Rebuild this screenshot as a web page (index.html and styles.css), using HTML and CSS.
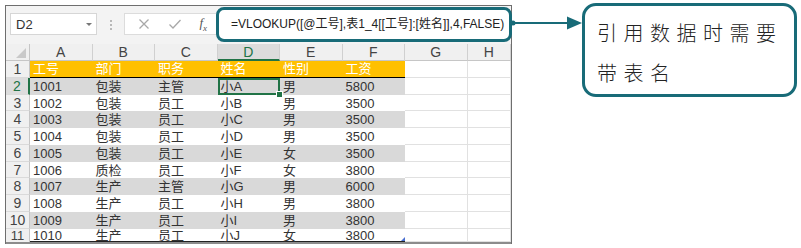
FILE: index.html
```html
<!DOCTYPE html>
<html lang="zh-CN">
<head>
    <meta charset="UTF-8">
    <title>VLOOKUP 表引用</title>
    <link rel="stylesheet" href="styles.css">
</head>
<body>

<div class="excel">
    <div class="toolbar">
        <div class="namebox">
            <span>D2</span>
            <span class="drop"></span>
        </div>
        <div class="grip"><i></i><i></i><i></i></div>
        <div class="buttons">
            <svg width="12" height="12" viewBox="0 0 12 12"><path d="M1.5 1.5 L10.5 10.5 M10.5 1.5 L1.5 10.5" stroke="#a8a8a8" stroke-width="1.3" fill="none"/></svg>
            <svg width="14" height="12" viewBox="0 0 14 12"><path d="M1.5 6.5 L5 10 L12.5 2" stroke="#a8a8a8" stroke-width="1.3" fill="none"/></svg>
            <span class="fx">f<sub>x</sub></span>
        </div>
        <div class="formula">=VLOOKUP([@工号],表1_4[[工号]:[姓名]],4,FALSE)</div>
    </div>

    <div class="sheet">
        <div class="corner"><span></span></div>
        <div class="ch">A</div><div class="ch">B</div><div class="ch">C</div><div class="ch sel">D</div>
        <div class="ch">E</div><div class="ch">F</div><div class="ch">G</div><div class="ch">H</div>

        <div class="rh">1</div>
        <div class="c head">工号</div><div class="c head">部门</div><div class="c head">职务</div>
        <div class="c head">姓名</div><div class="c head">性别</div><div class="c head">工资</div>
        <div class="c blank"></div><div class="c blank"></div>

        <div class="rh sel">2</div>
        <div class="c band">1001</div><div class="c band">包装</div><div class="c band">主管</div>
        <div class="c band active">小A</div><div class="c band">男</div><div class="c band">5800</div>
        <div class="c blank"></div><div class="c blank"></div>

        <div class="rh">3</div>
        <div class="c">1002</div><div class="c">包装</div><div class="c">员工</div>
        <div class="c">小B</div><div class="c">男</div><div class="c">3500</div>
        <div class="c blank"></div><div class="c blank"></div>

        <div class="rh">4</div>
        <div class="c band">1003</div><div class="c band">包装</div><div class="c band">员工</div>
        <div class="c band">小C</div><div class="c band">男</div><div class="c band">3500</div>
        <div class="c blank"></div><div class="c blank"></div>

        <div class="rh">5</div>
        <div class="c">1004</div><div class="c">包装</div><div class="c">员工</div>
        <div class="c">小D</div><div class="c">男</div><div class="c">3500</div>
        <div class="c blank"></div><div class="c blank"></div>

        <div class="rh">6</div>
        <div class="c band">1005</div><div class="c band">包装</div><div class="c band">员工</div>
        <div class="c band">小E</div><div class="c band">女</div><div class="c band">3500</div>
        <div class="c blank"></div><div class="c blank"></div>

        <div class="rh">7</div>
        <div class="c">1006</div><div class="c">质检</div><div class="c">员工</div>
        <div class="c">小F</div><div class="c">女</div><div class="c">3800</div>
        <div class="c blank"></div><div class="c blank"></div>

        <div class="rh">8</div>
        <div class="c band">1007</div><div class="c band">生产</div><div class="c band">主管</div>
        <div class="c band">小G</div><div class="c band">男</div><div class="c band">6000</div>
        <div class="c blank"></div><div class="c blank"></div>

        <div class="rh">9</div>
        <div class="c">1008</div><div class="c">生产</div><div class="c">员工</div>
        <div class="c">小H</div><div class="c">男</div><div class="c">3800</div>
        <div class="c blank"></div><div class="c blank"></div>

        <div class="rh">10</div>
        <div class="c band">1009</div><div class="c band">生产</div><div class="c band">员工</div>
        <div class="c band">小I</div><div class="c band">男</div><div class="c band">3800</div>
        <div class="c blank"></div><div class="c blank"></div>

        <div class="rh last">11</div>
        <div class="c last">1010</div><div class="c last">生产</div><div class="c last">员工</div>
        <div class="c last">小J</div><div class="c last">女</div><div class="c last end">3800</div>
        <div class="c blank"></div><div class="c blank"></div>
    </div>
</div>

<svg class="connector" width="71" height="30" viewBox="0 0 71 30">
    <circle cx="2" cy="15" r="2.5" fill="#186b78"/>
    <path d="M2 15 H58" stroke="#186b78" stroke-width="2"/>
    <path d="M56 8.5 L71 15 L56 21.5 Z" fill="#186b78"/>
</svg>

<div class="callout">引用数据时需要<br>带表名</div>

</body>
</html>
```

FILE: styles.css
```css
body {
    margin: 0;
    background: #fff;
    display: flex;
    align-items: flex-start;
    font-family: "Liberation Sans", "Noto Sans CJK SC", sans-serif;
    color: #333;
}
.excel {
    margin: 5px 0 0 5px;
    width: 505px;
    border: 1px solid #6e6e6e;
    border-bottom: none;
    background: #f3f3f3;
}
.toolbar {
    height: 38px;
    display: flex;
    align-items: flex-start;
}
.namebox {
    margin: 7px 0 0 4px;
    width: 87px;
    height: 22px;
    box-sizing: border-box;
    background: #fff;
    border: 1px solid #d6d6d6;
    display: flex;
    align-items: center;
    justify-content: space-between;
    padding: 0 4px 0 5px;
    font-size: 13px;
    color: #333;
}
.drop {
    width: 0;
    height: 0;
    border-left: 3px solid transparent;
    border-right: 3px solid transparent;
    border-top: 3px solid #777;
}
.grip {
    width: 27px;
    margin-top: 14px;
    display: flex;
    flex-direction: column;
    align-items: center;
    gap: 2px;
}
.grip i {
    width: 2px;
    height: 2px;
    background: #b8b8b8;
}
.buttons {
    margin-top: 7px;
    width: 92px;
    height: 22px;
    box-sizing: border-box;
    background: #fff;
    border: 1px solid #dcdcdc;
    border-right: none;
    display: flex;
    align-items: center;
    justify-content: space-around;
    padding-left: 4px;
}
.fx {
    font-family: "Liberation Serif", serif;
    font-style: italic;
    font-size: 13px;
    color: #555;
}
.fx sub {
    font-size: 9px;
}
.formula {
    margin: 1px -1px 0 0;
    flex: 1;
    height: 35px;
    box-sizing: border-box;
    background: #fff;
    border: 3px solid #186b78;
    border-radius: 8px;
    padding-left: 12px;
    font-size: 12px;
    line-height: 29px;
    color: #222;
    white-space: nowrap;
    overflow: hidden;
}
.sheet {
    display: grid;
    grid-template-columns: 24px repeat(7, 62.5px) 1fr;
    grid-template-rows: 17px repeat(10, 16.75px) 13px;
    background: #fff;
    border-bottom: 2px solid #8c8c8c;
    font-size: 13px;
    overflow: hidden;
}
.corner {
    background: #f0f0f0;
    border-right: 1px solid #c6c6c6;
    border-bottom: 1px solid #c6c6c6;
    position: relative;
}
.corner span {
    position: absolute;
    right: 3px;
    bottom: 2px;
    width: 0;
    height: 0;
    border-left: 10px solid transparent;
    border-bottom: 10px solid #c9c9c9;
}
.ch {
    background: #f0f0f0;
    border-right: 1px solid #d0d0d0;
    border-bottom: 1px solid #c6c6c6;
    text-align: center;
    font-size: 14px;
    line-height: 17px;
    color: #444;
}
.ch.sel {
    background: #dcdcdc;
    border-bottom: 2px solid #217346;
    color: #217346;
}
.rh {
    background: #f0f0f0;
    border-right: 1px solid #c6c6c6;
    border-bottom: 1px solid #dadada;
    text-align: center;
    font-size: 14px;
    line-height: 17px;
    color: #444;
}
.rh.sel {
    background: #dcdcdc;
    border-right: 2px solid #217346;
    color: #217346;
}
.rh.last {
    font-size: 13px;
    line-height: 13px;
    border-bottom: none;
}
.c {
    padding-left: 3px;
    line-height: 17px;
    white-space: nowrap;
    overflow: hidden;
}
.c.head {
    background: #ffc000;
    color: #fff;
    border-bottom: 1px solid #000;
    line-height: 16px;
}
.c.band {
    background: #d9d9d9;
}
.c.blank {
    border-right: 1px solid #e1e1e1;
    border-bottom: 1px solid #e1e1e1;
}
.c.last {
    border-bottom: 1px solid #222;
    line-height: 13px;
    overflow: visible;
}
.c.end {
    position: relative;
}
.c.end::after {
    content: "";
    position: absolute;
    right: 0;
    bottom: 0;
    border-left: 4px solid transparent;
    border-bottom: 4px solid #4a6fd0;
}
.c.active {
    position: relative;
    overflow: visible;
    box-shadow: inset 0 0 0 2px #217346;
}
.c.active::after {
    content: "";
    position: absolute;
    right: -3px;
    bottom: -3px;
    width: 5px;
    height: 5px;
    background: #217346;
    border: 1px solid #fff;
    z-index: 1;
}
.connector {
    margin-top: 8px;
    margin-left: -1px;
}
.callout {
    margin-top: 3px;
    width: 215px;
    height: 94px;
    box-sizing: border-box;
    border: 3px solid #186b78;
    border-radius: 14px;
    padding: 7px 0 0 12px;
    font-family: "Noto Sans CJK SC", sans-serif;
    font-weight: 300;
    font-size: 20px;
    letter-spacing: 6.5px;
    line-height: 40px;
    color: #222;
}
```
